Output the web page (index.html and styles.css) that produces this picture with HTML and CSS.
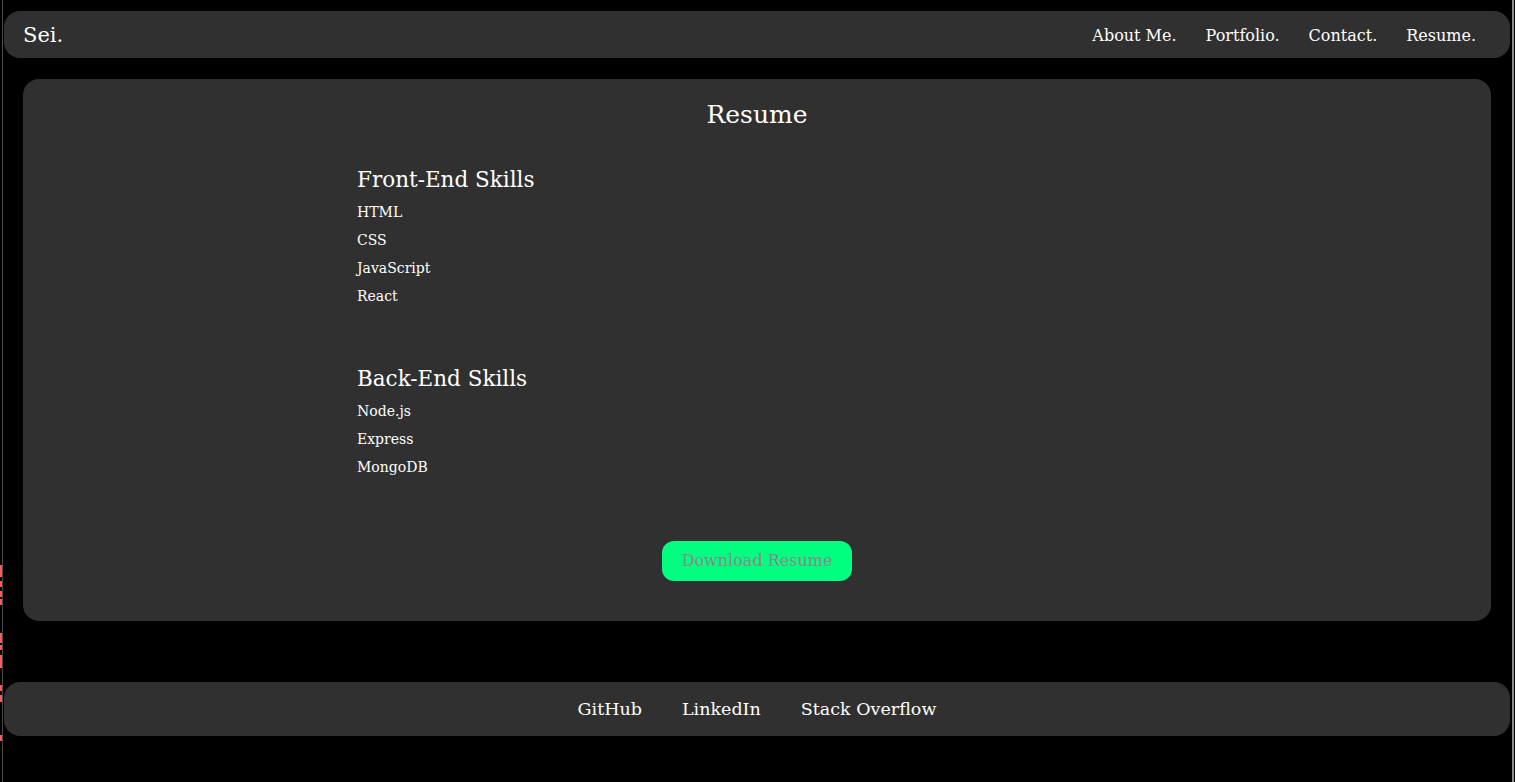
FILE: index.html
```html
<!DOCTYPE html>
<html lang="en">
<head>
<meta charset="utf-8">
<title>Sei. - Resume</title>
<link rel="stylesheet" href="styles.css">
</head>
<body>
<div class="frame">
  <div class="gutter"></div>
  <div class="page">
    <header class="navbar">
      <a class="logo" href="#">Sei.</a>
      <nav class="nav-links">
        <a href="#">About Me.</a>
        <a href="#">Portfolio.</a>
        <a href="#">Contact.</a>
        <a href="#">Resume.</a>
      </nav>
    </header>
    <main class="card">
      <h1 class="card-title">Resume</h1>
      <div class="skills">
        <section class="skill-group">
          <h2>Front-End Skills</h2>
          <ul>
            <li>HTML</li>
            <li>CSS</li>
            <li>JavaScript</li>
            <li>React</li>
          </ul>
        </section>
        <section class="skill-group">
          <h2>Back-End Skills</h2>
          <ul>
            <li>Node.js</li>
            <li>Express</li>
            <li>MongoDB</li>
          </ul>
        </section>
      </div>
      <div class="actions">
        <a class="btn" href="#">Download Resume</a>
      </div>
    </main>
    <footer class="footer">
      <a href="#">GitHub</a>
      <a href="#">LinkedIn</a>
      <a href="#">Stack Overflow</a>
    </footer>
  </div>
  <div class="edge"></div>
</div>
</body>
</html>
```
FILE: styles.css
```css
* { box-sizing: border-box; }
html, body { margin: 0; padding: 0; background: #000; }
body {
  font-family: "DejaVu Serif", Georgia, serif;
  color: #ffffff;
  height: 782px;
  overflow: hidden;
}
a { color: inherit; text-decoration: none; }

.frame {
  display: flex;
  height: 782px;
}
.gutter {
  width: 2px;
  flex: none;
  background:
    linear-gradient(to bottom,
      transparent 0, transparent 565px,
      #ff5a5a 565px, #ff5a5a 577px, transparent 577px, transparent 581px,
      #ff5a5a 581px, #ff5a5a 587px, transparent 587px, transparent 591px,
      #ff5a5a 591px, #ff5a5a 597px, transparent 597px, transparent 599px,
      #ff5a5a 599px, #ff5a5a 605px, transparent 605px, transparent 633px,
      #ff5a5a 633px, #ff5a5a 643px, transparent 643px, transparent 645px,
      #ff5a5a 645px, #ff5a5a 650px, transparent 650px, transparent 655px,
      #ff5a5a 655px, #ff5a5a 668px, transparent 668px, transparent 685px,
      #ff5a5a 685px, #ff5a5a 691px, transparent 691px, transparent 695px,
      #ff5a5a 695px, #ff5a5a 702px, transparent 702px, transparent 735px,
      #ff5a5a 735px, #ff5a5a 741px, transparent 741px);
}
.page {
  flex: 1;
  border-left: 1px solid #4a4a4a;
  padding: 11px 2px 0 1px;
  display: flex;
  flex-direction: column;
}
.edge {
  width: 3px;
  flex: none;
  border-left: 2px solid #8c8c8c;
}

.navbar {
  height: 47px;
  background: #303030;
  border-radius: 16px;
  display: flex;
  align-items: center;
  justify-content: space-between;
  padding: 1px 34px 0 19px;
}
.logo {
  font-size: 21px;
}
.nav-links {
  display: flex;
  gap: 29px;
  font-size: 16px;
}

.card {
  margin: 21px 19px 0 19px;
  height: 542px;
  background: #303030;
  border-radius: 16px;
  padding: 20px 0 0;
  display: flex;
  flex-direction: column;
  align-items: center;
}
.card-title {
  margin: 0;
  font-weight: normal;
  font-size: 25px;
  line-height: 32px;
}
.skills {
  width: 800px;
  margin-top: 35px;
}
.skill-group h2 {
  margin: 0 0 4px;
  font-weight: normal;
  font-size: 21.5px;
  line-height: 28px;
}
.skill-group ul {
  list-style: none;
  margin: 0;
  padding: 0;
}
.skill-group li {
  font-size: 14px;
  line-height: 28px;
}
.skill-group + .skill-group {
  margin-top: 55px;
}
.actions {
  margin-top: 60px;
}
.btn {
  display: inline-block;
  width: 190px;
  height: 40px;
  line-height: 40px;
  text-align: center;
  background: #00ff80;
  color: #8a8a8a;
  border-radius: 12px;
  font-size: 16px;
}

.footer {
  margin-top: 61px;
  height: 54px;
  background: #303030;
  border-radius: 16px;
  display: flex;
  justify-content: center;
  align-items: center;
  gap: 40px;
  font-size: 17.5px;
}
```
